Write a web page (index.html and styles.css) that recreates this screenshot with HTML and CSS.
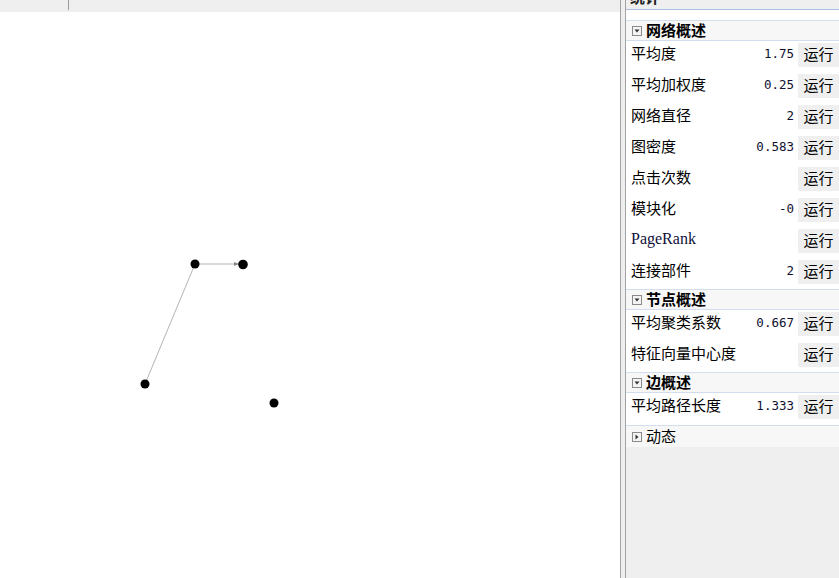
FILE: index.html
```html
<!DOCTYPE html>
<html lang="zh">
<head>
<meta charset="utf-8">
<title>统计</title>
<link rel="stylesheet" href="styles.css">
</head>
<body>
<div class="app">
  <div class="canvas-pane">
    <div class="toolbar"><span class="tool-sep"></span></div>
    <div class="graph">
      <svg class="graph-svg" width="620" height="566" viewBox="0 0 620 566">
        <line x1="195" y1="252" x2="243" y2="252" stroke="#b4b4b4" stroke-width="1"/>
        <line x1="195" y1="252" x2="145" y2="372" stroke="#b4b4b4" stroke-width="1"/>
        <polygon points="234,250 239,252 234,254" fill="#888"/>
        <circle cx="195" cy="252" r="4.5" fill="#000"/>
        <circle cx="243" cy="252.5" r="4.8" fill="#000"/>
        <circle cx="145" cy="372" r="4.5" fill="#000"/>
        <circle cx="274" cy="391" r="4.5" fill="#000"/>
      </svg>
    </div>
  </div>
  <div class="splitter"></div>
  <div class="panel">
    <div class="panel-tab"><span class="tab-title">统计</span></div>
    <div class="panel-gap"></div>

    <div class="section-header">
      <svg class="toggle" width="10" height="10" viewBox="0 0 10 10"><rect x="0.5" y="0.5" width="9" height="9" fill="#f4f4f4" stroke="#8a8a8a"/><polygon points="2.5,3.5 7.5,3.5 5,6.5" fill="#333"/></svg>
      <span class="section-title">网络概述</span>
    </div>
    <div class="row"><span class="label">平均度</span><span class="value">1.75</span><span class="run">运行</span></div>
    <div class="row"><span class="label">平均加权度</span><span class="value">0.25</span><span class="run">运行</span></div>
    <div class="row"><span class="label">网络直径</span><span class="value">2</span><span class="run">运行</span></div>
    <div class="row"><span class="label">图密度</span><span class="value">0.583</span><span class="run">运行</span></div>
    <div class="row"><span class="label">点击次数</span><span class="value"></span><span class="run">运行</span></div>
    <div class="row"><span class="label">模块化</span><span class="value">-0</span><span class="run">运行</span></div>
    <div class="row"><span class="label latin">PageRank</span><span class="value"></span><span class="run">运行</span></div>
    <div class="row"><span class="label">连接部件</span><span class="value">2</span><span class="run">运行</span></div>

    <div class="section-header">
      <svg class="toggle" width="10" height="10" viewBox="0 0 10 10"><rect x="0.5" y="0.5" width="9" height="9" fill="#f4f4f4" stroke="#8a8a8a"/><polygon points="2.5,3.5 7.5,3.5 5,6.5" fill="#333"/></svg>
      <span class="section-title">节点概述</span>
    </div>
    <div class="row"><span class="label">平均聚类系数</span><span class="value">0.667</span><span class="run">运行</span></div>
    <div class="row"><span class="label">特征向量中心度</span><span class="value"></span><span class="run">运行</span></div>

    <div class="section-header">
      <svg class="toggle" width="10" height="10" viewBox="0 0 10 10"><rect x="0.5" y="0.5" width="9" height="9" fill="#f4f4f4" stroke="#8a8a8a"/><polygon points="2.5,3.5 7.5,3.5 5,6.5" fill="#333"/></svg>
      <span class="section-title">边概述</span>
    </div>
    <div class="row"><span class="label">平均路径长度</span><span class="value">1.333</span><span class="run">运行</span></div>

    <div class="section-header collapsed">
      <svg class="toggle" width="10" height="10" viewBox="0 0 10 10"><rect x="0.5" y="0.5" width="9" height="9" fill="#f4f4f4" stroke="#8a8a8a"/><polygon points="3.5,2.5 6.5,5 3.5,7.5" fill="#333"/></svg>
      <span class="section-title plain">动态</span>
    </div>
    <div class="panel-fill"></div>
  </div>
</div>
</body>
</html>
```

FILE: styles.css
```css
html, body {
  margin: 0;
  padding: 0;
  width: 839px;
  height: 578px;
  overflow: hidden;
  background: #ffffff;
  font-family: "Noto Sans CJK SC", "Liberation Sans", sans-serif;
}

.app {
  display: flex;
  width: 839px;
  height: 578px;
}

.canvas-pane {
  width: 620px;
  display: flex;
  flex-direction: column;
  background: #ffffff;
}

.toolbar {
  height: 12px;
  background: #efefef;
  display: flex;
  padding-left: 68px;
}

.tool-sep {
  width: 1px;
  height: 10px;
  background: #9a9a9a;
}

.graph {
  flex: 1;
  background: #ffffff;
}

.graph-svg {
  display: block;
}

.splitter {
  width: 4px;
  background: #efefef;
  border-left: 1px solid #a2a2a2;
  border-right: 1px solid #a2a2a2;
}

.panel {
  width: 213px;
  display: flex;
  flex-direction: column;
  background: #ffffff;
}

.panel-tab {
  height: 9px;
  overflow: hidden;
  background: #efefef;
  border-bottom: 1px solid #a8bfe2;
  padding-left: 4px;
}

.tab-title {
  display: block;
  font-size: 15px;
  line-height: 15px;
  font-weight: 700;
  margin-top: -11px;
  color: #222;
}

.panel-gap {
  height: 10px;
  background: #ffffff;
}

.section-header {
  height: 19px;
  border-top: 1px solid #d2ddf0;
  border-bottom: 1px solid #d2ddf0;
  background: #f7f7f7;
  display: flex;
  align-items: center;
  padding-left: 6px;
  gap: 4px;
}

.section-header.collapsed {
  border-bottom: none;
  height: 21px;
  margin-top: 1px;
}

.toggle {
  display: block;
  flex: none;
}

.section-title {
  font-size: 15px;
  font-weight: 700;
  color: #000;
  line-height: 19px;
  margin-top: -3px;
}

.section-title.plain {
  font-weight: 400;
}

.row {
  height: 31px;
  display: flex;
  align-items: center;
  padding-left: 5px;
  background: #ffffff;
}

.label {
  flex: 1;
  font-size: 15px;
  color: #000;
  line-height: 20px;
  margin-top: -8px;
}

.label.latin {
  font-family: "Liberation Serif", serif;
  font-size: 16px;
  color: #10103a;
}

.value {
  font-family: "DejaVu Sans Mono", monospace;
  font-size: 12.5px;
  color: #101030;
  margin-right: 4px;
  margin-top: -6px;
}

.run {
  width: 41px;
  height: 24px;
  background: #efefef;
  font-size: 15px;
  line-height: 22px;
  text-align: center;
  color: #000;
  margin-top: -3px;
}

.panel-fill {
  flex: 1;
  background: #efefef;
}
```
